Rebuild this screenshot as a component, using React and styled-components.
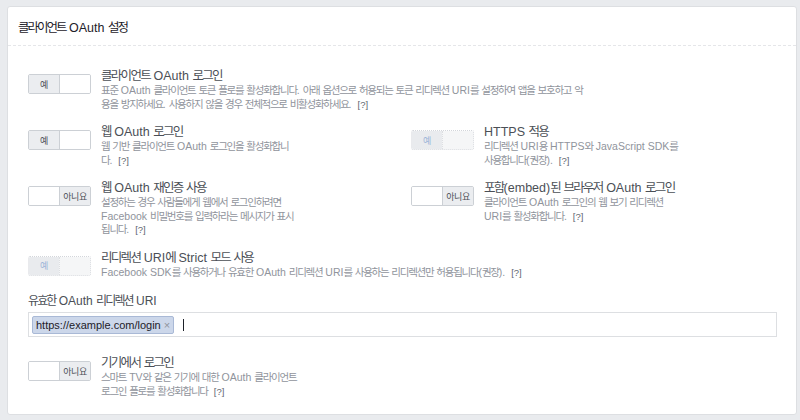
import React from "react";
import styled, { createGlobalStyle } from "styled-components";

const GlobalStyle = createGlobalStyle`
  html, body {
    margin: 0;
    padding: 0;
    background: #e9ebee;
  }
  body {
    font-family: "Liberation Sans", "Noto Sans CJK KR", sans-serif;
  }
`;

const rows = {
  first: {
    value: true,
    title: "클라이언트 OAuth 로그인",
    lines: [
      "표준 OAuth 클라이언트 토큰 플로를 활성화합니다. 아래 옵션으로 허용되는 토큰 리디렉션 URI를 설정하여 앱을 보호하고 악",
      "용을 방지하세요. 사용하지 않을 경우 전체적으로 비활성화하세요.",
    ],
  },
  web: {
    value: true,
    title: "웹 OAuth 로그인",
    lines: ["웹 기반 클라이언트 OAuth 로그인을 활성화합니", "다."],
  },
  https: {
    value: true,
    disabled: true,
    title: "HTTPS 적용",
    lines: ["리디렉션 URI용 HTTPS와 JavaScript SDK를", "사용합니다(권장)."],
  },
  reauth: {
    value: false,
    title: "웹 OAuth 재인증 사용",
    lines: [
      "설정하는 경우 사람들에게 웹에서 로그인하려면",
      "Facebook 비밀번호를 입력하라는 메시지가 표시",
      "됩니다.",
    ],
  },
  embed: {
    value: false,
    title: "포함(embed)된 브라우저 OAuth 로그인",
    lines: ["클라이언트 OAuth 로그인의 웹 보기 리디렉션", "URI를 활성화합니다."],
  },
  strict: {
    value: true,
    disabled: true,
    title: "리디렉션 URI에 Strict 모드 사용",
    lines: [
      "Facebook SDK를 사용하거나 유효한 OAuth 리디렉션 URI를 사용하는 리디렉션만 허용됩니다(권장).",
    ],
  },
  device: {
    value: false,
    title: "기기에서 로그인",
    lines: ["스마트 TV와 같은 기기에 대한 OAuth 클라이언트", "로그인 플로를 활성화합니다"],
  },
};

// hangul runs are narrowed with letter-spacing, everything else keeps its natural width
const Mixed = ({ text, tight }) =>
  text.split(/([\uAC00-\uD7A3]+)/).map((part, i) =>
    i % 2 === 1 ? (
      <Hangul key={i} $tight={tight}>
        {part}
      </Hangul>
    ) : (
      <React.Fragment key={i}>{part}</React.Fragment>
    )
  );

const Toggle = ({ value, disabled }) => (
  <ToggleBox disabled={disabled}>
    <ToggleHalf $on={value} disabled={disabled} $side="left">
      {value ? "예" : ""}
    </ToggleHalf>
    <ToggleHalf $on={!value} disabled={disabled} $side="right">
      {value ? "" : "아니요"}
    </ToggleHalf>
  </ToggleBox>
);

const Setting = ({ data }) => (
  <Row>
    <Toggle value={data.value} disabled={data.disabled} />
    <TextCol>
      <Title>
        <Mixed text={data.title} tight={-1.7} />
      </Title>
      <Desc>
        {data.lines.map((l, i) => (
          <React.Fragment key={i}>
            <Mixed text={l} tight={-1.25} />
            {i === data.lines.length - 1 ? <Help>[?]</Help> : <br />}
          </React.Fragment>
        ))}
      </Desc>
    </TextCol>
  </Row>
);

const App = () => {
  return (
    <>
      <GlobalStyle />
      <Card>
        <Header>
          <Mixed text="클라이언트 OAuth 설정" tight={-2} />
        </Header>
        <Body>
          <Grid>
            <Full>
              <Setting data={rows.first} />
            </Full>
            <Setting data={rows.web} />
            <Setting data={rows.https} />
            <Setting data={rows.reauth} />
            <Setting data={rows.embed} />
            <Full>
              <Setting data={rows.strict} />
            </Full>
          </Grid>
          <Label>
            <Mixed text="유효한 OAuth 리디렉션 URI" tight={-1.9} />
          </Label>
          <TokenInput>
            <Token>
              https://example.com/login <Remove>×</Remove>
            </Token>
            <Caret />
          </TokenInput>
          <Bottom>
            <Setting data={rows.device} />
          </Bottom>
        </Body>
      </Card>
    </>
  );
};

export default App;

const Card = styled.section`
  margin: 6px 3px 0 7px;
  height: 409px;
  box-sizing: border-box;
  background: #fff;
  border: 1px solid #dddfe2;
  border-radius: 3px;
`;

const Header = styled.div`
  height: 39px;
  box-sizing: border-box;
  padding: 13px 10px 0 10px;
  font-size: 12.5px;
  color: #1d2129;
  line-height: 16px;
  border-bottom: 1px dashed #e5e6e9;
`;

const Hangul = styled.span`
  letter-spacing: ${(p) => p.$tight}px;
`;

const Body = styled.div`
  padding: 22px 19px 0 20px;
`;

const Grid = styled.div`
  display: grid;
  grid-template-columns: 383px 1fr;
  row-gap: 13px;
`;

const Full = styled.div`
  grid-column: 1 / span 2;
`;

const Row = styled.div`
  display: flex;
  align-items: flex-start;
  gap: 10px;
`;

const ToggleBox = styled.div`
  flex: none;
  display: flex;
  width: 63px;
  height: 20px;
  margin-top: 6px;
  box-sizing: border-box;
  border: 1px ${(p) => (p.disabled ? "dotted #d3d6db" : "solid #ccd0d5")};
  border-radius: 2px;
  overflow: hidden;
`;

const ToggleHalf = styled.div`
  flex: 1;
  display: flex;
  align-items: center;
  justify-content: center;
  font-size: 9px;
  letter-spacing: -0.5px;
  color: ${(p) => (p.disabled ? "#9cb4d8" : "#4b4f56")};
  background: ${(p) =>
    p.$on ? (p.disabled ? "#e9ebee" : "#ebedf0") : p.disabled ? "#f5f6f7" : "#fff"};
  border-left: ${(p) =>
    p.$side === "right" ? (p.disabled ? "1px dotted #dddfe2" : "1px solid #ccd0d5") : "none"};
`;

const TextCol = styled.div`
  display: flex;
  flex-direction: column;
`;

const Title = styled.div`
  font-size: 12.5px;
  line-height: 16px;
  color: #4b4f56;
  white-space: nowrap;
`;

const Desc = styled.div`
  font-size: 10.5px;
  line-height: 13.5px;
  color: #90949c;
  white-space: nowrap;
`;

const Help = styled.span`
  color: #616770;
  font-size: 9.5px;
  margin-left: 6px;
`;

const Label = styled.div`
  margin-top: 14px;
  font-size: 12px;
  line-height: 16px;
  color: #4b4f56;
`;

const TokenInput = styled.div`
  margin-top: 3px;
  height: 25px;
  box-sizing: border-box;
  border: 1px solid #dddfe2;
  display: flex;
  align-items: center;
  padding: 0 3px;
  gap: 9px;
`;

const Token = styled.span`
  display: inline-flex;
  align-items: center;
  height: 18px;
  box-sizing: border-box;
  padding: 0 3px;
  font-size: 11px;
  color: #1d2129;
  background: #ccd7ea;
  border: 1px solid #a9b9d6;
  border-radius: 2px;
  white-space: pre;
`;

const Remove = styled.span`
  color: #90949c;
  font-size: 11px;
`;

const Caret = styled.span`
  display: inline-block;
  width: 0;
  height: 12px;
  border-left: 1px solid #1d2129;
`;

const Bottom = styled.div`
  margin-top: 18px;
`;
